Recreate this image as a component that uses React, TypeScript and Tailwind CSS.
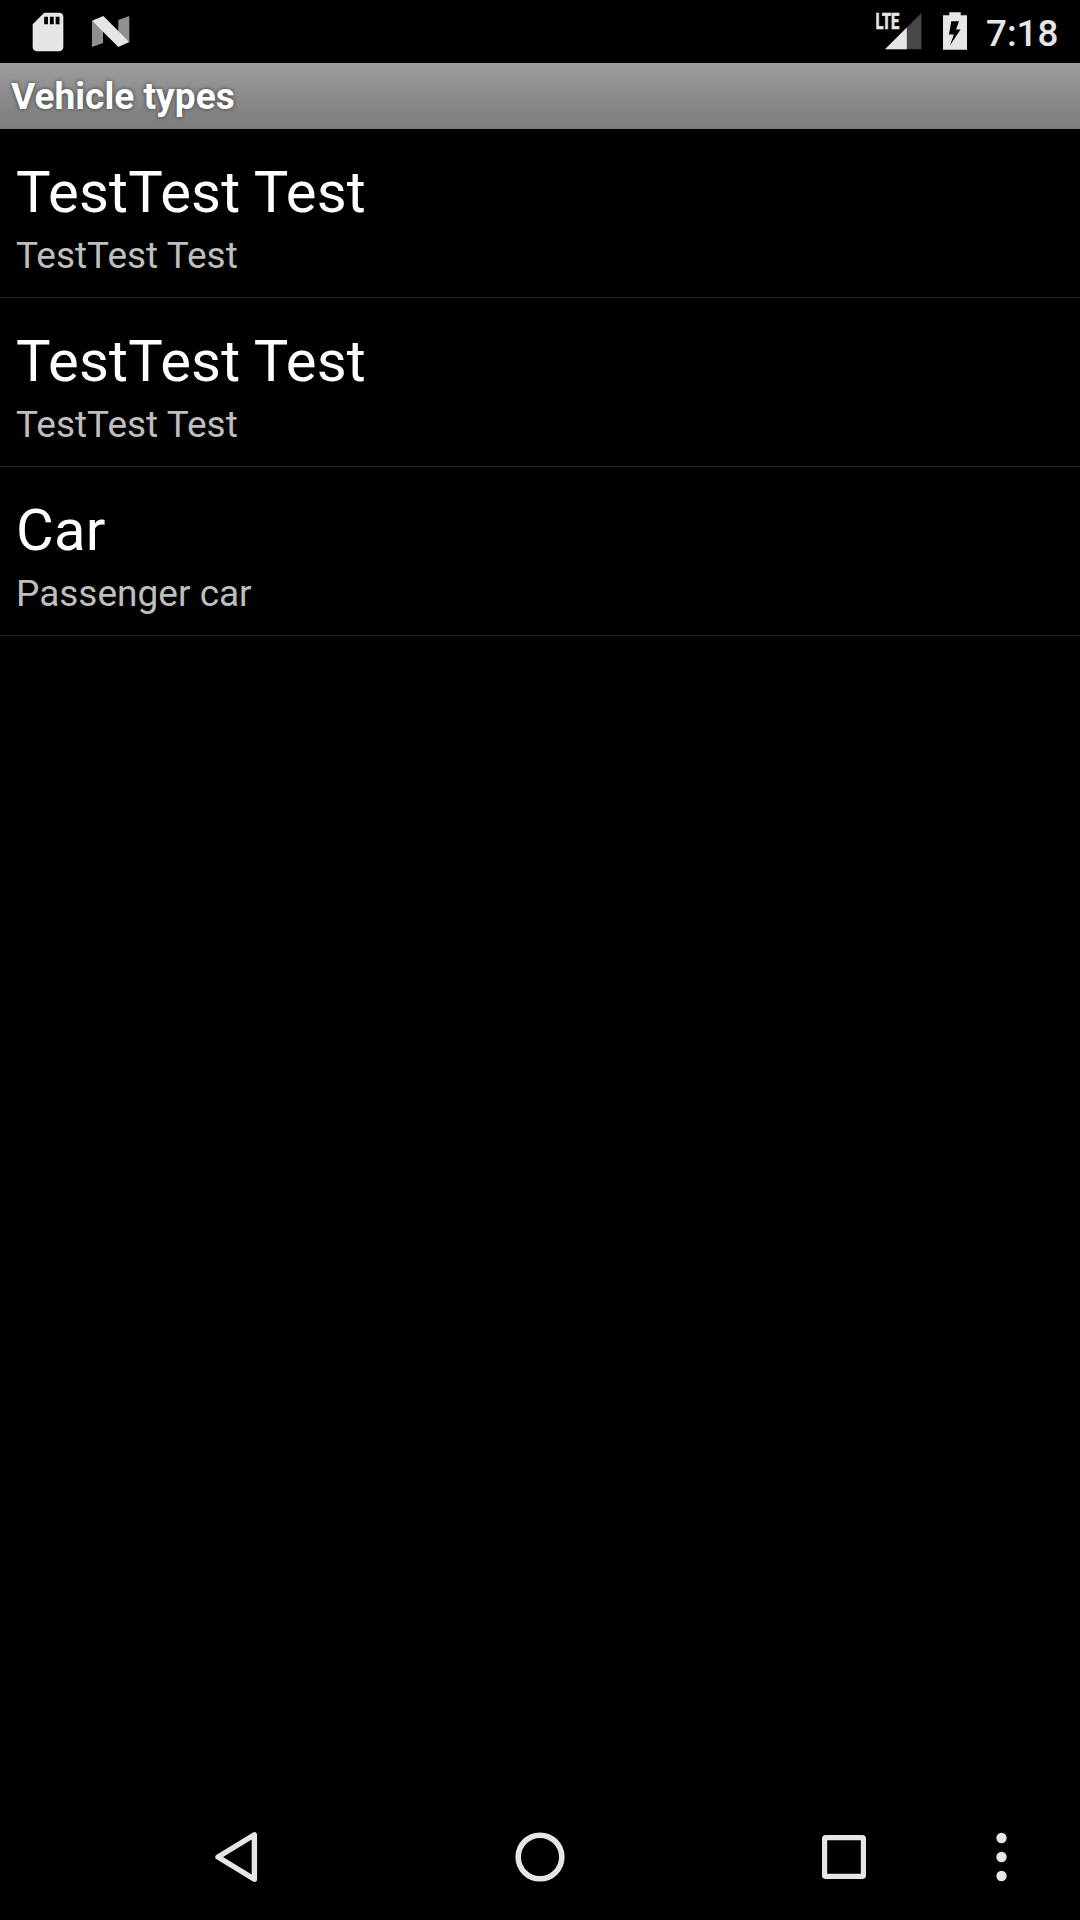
const items = [
  { title: "TestTest Test", subtitle: "TestTest Test" },
  { title: "TestTest Test", subtitle: "TestTest Test" },
  { title: "Car", subtitle: "Passenger car" },
];

function SdCardIcon() {
  return (
    <svg className="h-[46px] w-[46px]" viewBox="0 0 24 24" fill="#e6e6e6">
      <path d="M18 2h-8L4.02 8 4 20c0 1.1.9 2 2 2h12c1.1 0 2-.9 2-2V4c0-1.1-.9-2-2-2zm-6 6h-2V4h2v4zm3 0h-2V4h2v4zm3 0h-2V4h2v4z" />
    </svg>
  );
}

function NougatIcon() {
  return (
    <svg className="h-[63px] w-[38px]" viewBox="0 0 38 63">
      <path d="M0 20.7L11 31v12L0 47z" fill="#8f8f8f" />
      <path d="M26.3 20L37.3 16v26L26.3 32z" fill="#8f8f8f" />
      <path d="M0 20.7L11.3 16L37.3 42L26.3 47z" fill="#e6e6e6" />
    </svg>
  );
}

function SignalIcon() {
  return (
    <svg className="h-[63px] w-[46px]" viewBox="0 0 46 63">
      <path d="M9 49.3L45.4 13v36.3z" fill="#474747" />
      <path d="M9 49.3L30.8 27.5v21.8z" fill="#e6e6e6" />
      <text
        x="0"
        y="0"
        transform="translate(-0.4 29) scale(0.67 1)"
        fontSize="22"
        fontWeight="700"
        fill="#e6e6e6"
        stroke="#e6e6e6"
        strokeWidth="0.7"
      >
        LTE
      </text>
    </svg>
  );
}

function BatteryIcon() {
  return (
    <svg className="h-[63px] w-6" viewBox="0 0 24 63">
      <path
        fillRule="evenodd"
        fill="#e6e6e6"
        d="M6.3 12.2h11.4v3H24v34.6H0V15.2h6.3zM8.3 21.2L6 34.4H10.8L7 45.6L17.5 29.4H13L16 21.2z"
      />
    </svg>
  );
}

function StatusBar() {
  return (
    <header className="flex h-[63px] shrink-0 items-center justify-between pr-[21px] pl-[24.5px]">
      <div className="flex items-center">
        <SdCardIcon />
        <div className="ml-[21px]">
          <NougatIcon />
        </div>
      </div>
      <div className="flex items-center">
        <SignalIcon />
        <div className="ml-[21px]">
          <BatteryIcon />
        </div>
        <span className="ml-[19px] w-[73px] pt-[5px] text-[36.75px] leading-[44px] font-medium whitespace-nowrap text-[#e6e6e6]">
          7:18
        </span>
      </div>
    </header>
  );
}

function NavBar() {
  return (
    <nav className="flex h-[126px] shrink-0 items-center pl-[210px]">
      <svg className="h-[60px] w-[60px]" viewBox="0 0 60 60" fill="none" stroke="#e6e6e6">
        <path d="M44.4 7.8v44.4L8 30z" strokeWidth="5.4" strokeLinejoin="round" />
      </svg>
      <svg className="ml-[240px] h-[60px] w-[60px]" viewBox="0 0 60 60" fill="none" stroke="#e6e6e6">
        <circle cx="30" cy="30" r="21.8" strokeWidth="5.6" />
      </svg>
      <svg className="ml-[244px] h-[60px] w-[60px]" viewBox="0 0 60 60" fill="none" stroke="#e6e6e6">
        <rect x="10.6" y="10.6" width="38.8" height="38.8" rx="1.2" strokeWidth="5.2" />
      </svg>
      <svg className="ml-[97px] h-[60px] w-[61px]" viewBox="0 0 61 60" fill="#e6e6e6">
        <circle cx="30.5" cy="11" r="5.2" />
        <circle cx="30.5" cy="30" r="5.2" />
        <circle cx="30.5" cy="49" r="5.2" />
      </svg>
    </nav>
  );
}

export default function App() {
  return (
    <div className="flex h-[1920px] w-[1080px] flex-col overflow-hidden bg-black font-['Roboto',sans-serif]">
      <StatusBar />
      <div className="flex h-[66px] shrink-0 items-center bg-linear-to-b from-[#9c9c9c] to-[#7c7c7c] pt-[2px] pl-[11px]">
        <h1 className="text-[37px] leading-[44px] font-bold tracking-[0.05px] text-white [text-shadow:0_0_4px_rgba(0,0,0,0.6)]">
          Vehicle types
        </h1>
      </div>
      <ul className="flex-1">
        {items.map((item, i) => (
          <li key={i} className="h-[169px] border-b border-[#212121] pt-[29px] pl-[16px]">
            <div className="text-[58px] leading-[68px] tracking-[0.18px] text-white">{item.title}</div>
            <div className="mt-[8px] text-[37px] leading-[43px] text-[#bebebe]">{item.subtitle}</div>
          </li>
        ))}
      </ul>
      <NavBar />
    </div>
  );
}
